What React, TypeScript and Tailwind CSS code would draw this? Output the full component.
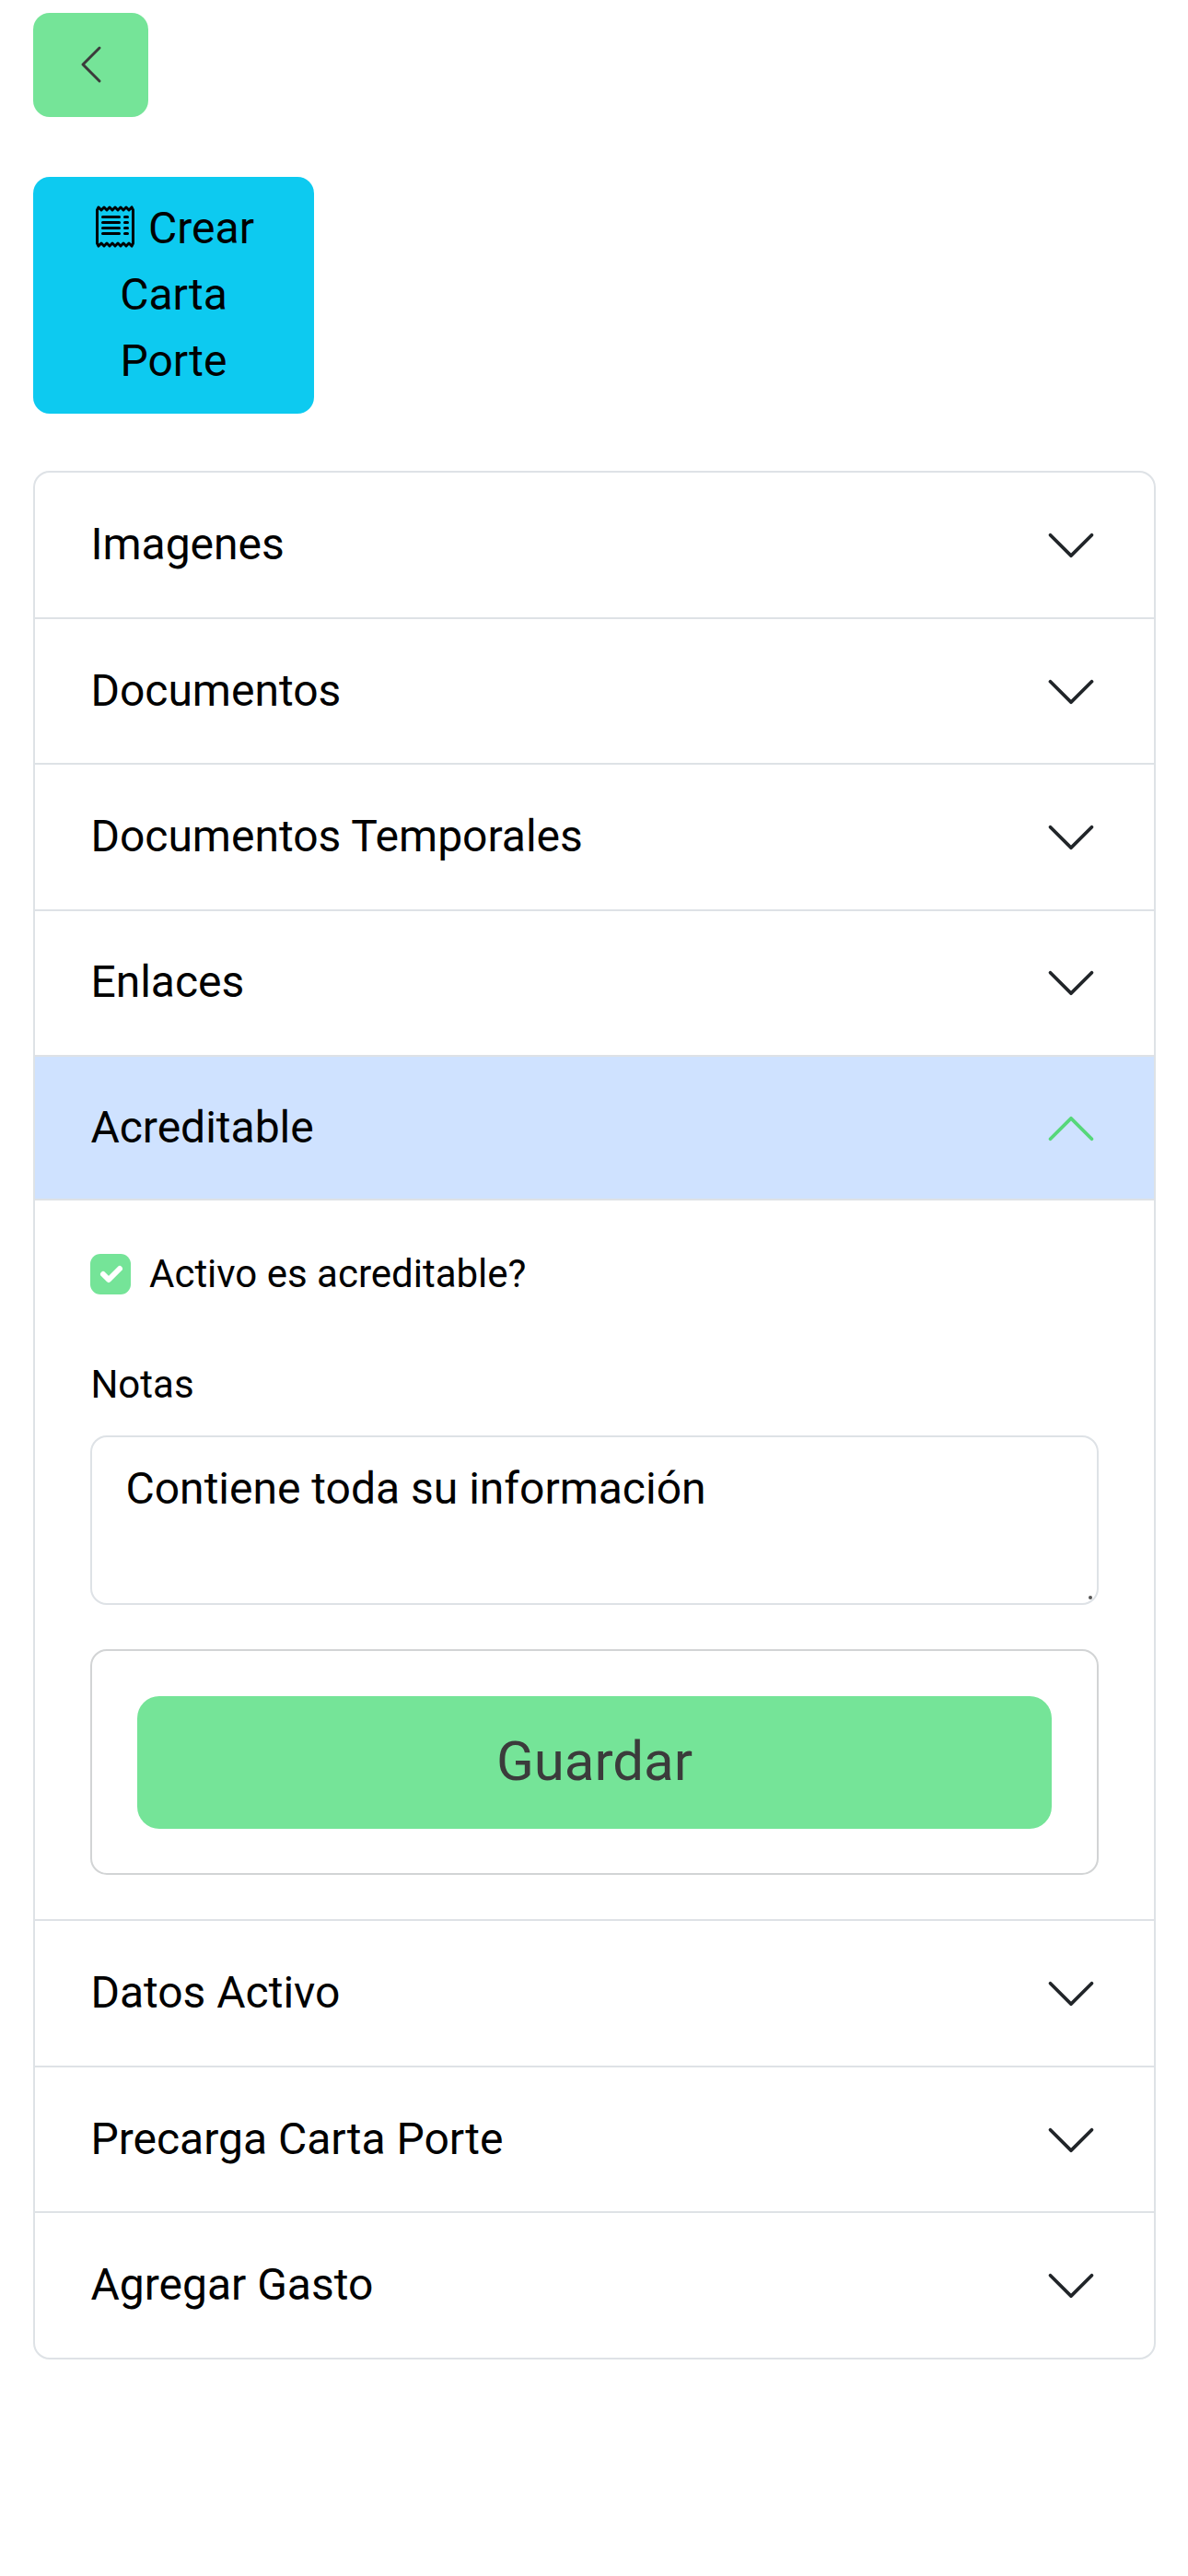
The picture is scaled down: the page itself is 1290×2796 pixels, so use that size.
import { useState } from "react";
import { BsChevronDown, BsChevronLeft, BsReceipt } from "react-icons/bs";

type HeaderProps = {
  title: string;
  open?: boolean;
  size: string;
};

function AccordionHeader({ title, open, size }: HeaderProps) {
  return (
    <button
      type="button"
      className={`flex w-full items-center justify-between pr-[60px] pl-[60.4px] text-left text-[48px] leading-[72px] ${size} ${
        open ? "border-b-2 border-[#dee2e6] bg-[#cfe2ff]" : ""
      }`}
    >
      <span className="-translate-y-px">{title}</span>
      <BsChevronDown
        className={`size-[60px] shrink-0 ${open ? "rotate-180 text-[#56d77a]" : "text-[#212529]"}`}
      />
    </button>
  );
}

function AcreditableForm() {
  const [active, setActive] = useState(true);
  return (
    <div className="h-[780px] px-[60px] pt-[48px]">
      <label className="flex h-[63px] items-center text-[42px] leading-[63px]">
        <input
          type="checkbox"
          className="sr-only"
          checked={active}
          onChange={() => setActive(!active)}
        />
        <span className="mr-[20px] flex size-[44px] items-center justify-center rounded-[11px] bg-[#75e498]">
          {active && (
            <svg viewBox="0 0 20 20" className="size-[40px]" fill="none">
              <path
                d="m6 10 3 3 6-6"
                stroke="#fff"
                strokeWidth="3"
                strokeLinecap="round"
                strokeLinejoin="round"
              />
            </svg>
          )}
        </span>
        Activo es acreditable?
      </label>
      <label htmlFor="notas" className="mt-[57px] block pl-[0.4px] text-[42px] leading-[63px]">
        Notas
      </label>
      <div className="relative mt-[24px]">
        <textarea
          id="notas"
          defaultValue="Contiene toda su información"
          className="block h-[184px] w-full resize-none overflow-hidden rounded-[18px] border-2 border-[#dee2e6] px-[36.5px] pt-[20px] text-[48px] leading-[72px] outline-none"
        />
        <span className="absolute right-[7px] bottom-[6px] size-[4px] rounded-full bg-[#555]" />
      </div>
      <div className="mt-[48px] h-[245px] rounded-[18px] border-2 border-[#d2d4d5] px-[49px] pt-[49px]">
        <button
          type="button"
          className="h-[144px] w-full rounded-[24px] bg-[#75e498] pb-[3px] text-[60px] leading-[90px] text-[#3b3b3b]"
        >
          Guardar
        </button>
      </div>
    </div>
  );
}

export default function App() {
  return (
    <main className="min-h-[2796px] bg-white px-[36px] pt-[14px] font-['Roboto',sans-serif] text-black">
      <button
        type="button"
        aria-label="Regresar"
        className="flex h-[113px] w-[125px] items-center justify-center rounded-[18px] bg-[#75e498] pb-px text-[#3b3b3b]"
      >
        <BsChevronLeft className="size-[48px]" />
      </button>

      <button
        type="button"
        className="mt-[65px] block h-[257px] w-[305px] rounded-[18px] bg-[#0dcaf0] px-[38px] pb-[2px] text-center text-[48px] leading-[72px]"
      >
        <BsReceipt className="inline-block size-[48px] align-[-6px]" /> Crear Carta Porte
      </button>

      <div className="mt-[62px] w-[1219px] divide-y-2 divide-[#dee2e6] overflow-hidden rounded-[18px] border-2 border-[#dee2e6]">
        <AccordionHeader title="Imagenes" size="h-[159px]" />
        <AccordionHeader title="Documentos" size="h-[158px] pt-px" />
        <AccordionHeader title="Documentos Temporales" size="h-[159px]" />
        <AccordionHeader title="Enlaces" size="h-[158px]" />
        <section>
          <AccordionHeader title="Acreditable" size="h-[156px] pt-[2px]" open />
          <AcreditableForm />
        </section>
        <AccordionHeader title="Datos Activo" size="h-[159px]" />
        <AccordionHeader title="Precarga Carta Porte" size="h-[158px] pt-px" />
        <AccordionHeader title="Agregar Gasto" size="h-[157px]" />
      </div>
    </main>
  );
}
